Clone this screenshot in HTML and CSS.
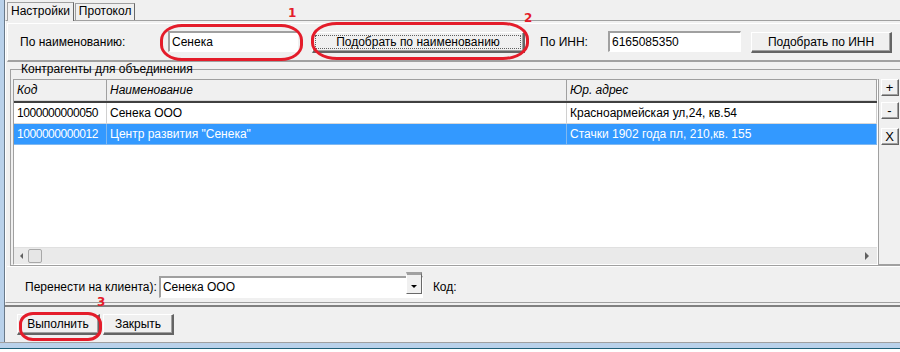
FILE: index.html
```html
<!DOCTYPE html>
<html lang="ru">
<head>
<meta charset="utf-8">
<link rel="stylesheet" href="styles.css">
</head>
<body>
<div class="window">
  <div class="frame-left"></div>
  <div class="client">
    <div class="tabs">
      <div class="tab active">Настройки</div>
      <div class="tab">Протокол</div>
    </div>
    <div class="page">
      <div class="search-panel">
        <span class="lbl lbl-name">По наименованию:</span>
        <div class="edit edit-name">Сенека</div>
        <div class="btn btn-find-name"><span class="focus">Подобрать по наименованию</span></div>
        <span class="lbl lbl-inn">По ИНН:</span>
        <div class="edit edit-inn">6165085350</div>
        <div class="btn btn-find-inn">Подобрать по ИНН</div>
      </div>
      <div class="group">
        <div class="group-title">Контрагенты для объединения</div>
        <div class="group-body">
          <div class="grid">
            <div class="grid-rows">
              <div class="row head">
                <div class="cell c1">Код</div>
                <div class="cell c2">Наименование</div>
                <div class="cell c3">Юр. адрес</div>
              </div>
              <div class="row">
                <div class="cell c1 num-cell">1000000000050</div>
                <div class="cell c2">Сенека ООО</div>
                <div class="cell c3">Красноармейская ул,24, кв.54</div>
              </div>
              <div class="row sel">
                <div class="cell c1 num-cell">1000000000012</div>
                <div class="cell c2">Центр развития "Сенека"</div>
                <div class="cell c3">Стачки 1902 года пл, 210,кв. 155</div>
              </div>
            </div>
            <div class="hscroll">
              <span class="arrow-left"></span>
              <span class="thumb"></span>
              <span class="track"></span>
              <span class="arrow-right"></span>
            </div>
          </div>
          <div class="side">
            <div class="sbtn">+</div>
            <div class="sbtn">-</div>
            <div class="sbtn x">X</div>
          </div>
        </div>
      </div>
      <div class="transfer">
        <span class="lbl">Перенести на клиента):</span>
        <div class="combo">
          <span class="combo-text">Сенека ООО</span>
          <span class="combo-btn"><span class="tri"></span></span>
        </div>
        <span class="lbl kod">Код:</span>
      </div>
    </div>
    <div class="footer">
      <div class="btn btn-run">Выполнить</div>
      <div class="btn btn-close">Закрыть</div>
    </div>
    <div class="frame-bottom"></div>
  </div>

  <div class="mark ell1"></div>
  <div class="mark ell2"></div>
  <div class="mark ell3"></div>
  <div class="num n1">1</div>
  <div class="num n2">2</div>
  <div class="num n3">3</div>
</div>
</body>
</html>
```

FILE: styles.css
```css
* { box-sizing: border-box; }
html, body { margin: 0; padding: 0; }
body {
  width: 900px;
  height: 352px;
  overflow: hidden;
  background: #f0f0f0;
  font-family: "Liberation Sans", "DejaVu Sans", sans-serif;
  font-size: 12px;
  color: #000;
}
.window {
  position: relative;
  display: flex;
  width: 900px;
  height: 352px;
}
.frame-left {
  width: 5px;
  flex: none;
  background: #b9d1ea;
  border-right: 1px solid #6a7a8a;
}
.client {
  flex: 1;
  display: flex;
  flex-direction: column;
  min-width: 0;
}
.tabs {
  display: flex;
  height: 20px;
  align-items: flex-end;
  padding-left: 2px;
}
.tab {
  height: 17px;
  padding: 0 3px;
  border: 1px solid #a0a0a0;
  border-bottom: none;
  background: #f0f0f0;
  line-height: 15px;
  margin-right: 1px;
  border-right-color: #696969;
}
.tab.active {
  height: 19px;
  line-height: 17px;
  background: #f0f0f0;
  position: relative;
  z-index: 1;
  margin-bottom: -1px;
  border-right-color: #696969;
  padding: 0 3px;
}
.page {
  height: 283px;
  border-top: 1px solid #a0a0a0;
  border-left: 1px solid #fff;
  border-bottom: 1px solid #a0a0a0;
  display: flex;
  flex-direction: column;
  padding: 2px 0 0 1px;
}
.search-panel {
  height: 39px;
  display: flex;
  align-items: center;
  border-top: 1px solid #fff;
  border-left: 1px solid #fff;
  border-bottom: 2px solid #a0a0a0;
  padding-left: 12px;
}
.lbl { white-space: nowrap; }
.lbl-name { width: 148px; }
.edit {
  height: 21px;
  background: #fff;
  border: 1px solid #fff;
  border-top: 2px solid #a0a0a0;
  border-left: 2px solid #a0a0a0;
  padding: 1px 2px;
  line-height: 16px;
  white-space: nowrap;
}
.edit-name { width: 130px; margin-top: -1px; }
.btn {
  height: 21px;
  background: #f0f0f0;
  border: 1px solid #fff;
  border-right: 2px solid #646464;
  border-bottom: 2px solid #646464;
  box-shadow: inset -1px -1px 0 #a0a0a0;
  display: flex;
  align-items: center;
  justify-content: center;
  white-space: nowrap;
}
.btn-find-name { width: 213px; margin-left: 14px; margin-top: 1px; padding: 2px; }
.btn-find-name .focus {
  display: flex;
  align-items: center;
  justify-content: center;
  width: 100%;
  height: 100%;
  border: 1px dotted #606060;
}
.lbl-inn { margin-left: 15px; width: 68px; }
.edit-inn { width: 133px; margin-top: -1px; }
.btn-find-inn { width: 141px; margin-left: 10px; margin-top: 1px; }

.group {
  margin-top: 1px;
  height: 203px;
  flex: none;
  display: flex;
  flex-direction: column;
  padding-left: 3px;
}
.group-title {
  height: 12px;
  line-height: 12px;
  padding-left: 11px;
  position: relative;
}
.group-title::before {
  content: "";
  position: absolute;
  left: 3px;
  top: 6px;
  width: 6px;
  border-top: 1px solid #a0a0a0;
}
.group-body {
  flex: 1;
  display: flex;
  border-left: 1px solid #a0a0a0;
  border-top: 1px solid #a0a0a0;
  margin-top: -6px;
  padding: 9px 0 0 2px;
  border-bottom: 1px solid #a0a0a0;
}
.grid {
  width: 865px;
  height: 186px;
  border: 1px solid #a0a0a0;
  border-right-color: #fff;
  border-bottom-color: #fff;
  background: #fff;
  display: flex;
  flex-direction: column;
}
.grid-rows { flex: 1; }
.row { display: flex; height: 21px; }
.row.head { height: 23px; background: #f0f0f0; border-bottom: 2px solid #404040; }
.row.head .cell { font-style: italic; border-right: 1px solid #a0a0a0; }
.cell {
  padding: 0 2px 0 3px;
  display: flex;
  align-items: center;
  border-right: 1px solid #d0d0d0;
  border-bottom: 1px solid #d8d8d8;
  white-space: nowrap;
  overflow: hidden;
}
.num-cell { letter-spacing: -0.45px; }
.c1 { width: 93px; }
.c2 { width: 460px; }
.c3 { flex: 1; }
.row.sel { background: #3399ff; color: #fff; }
.row.sel .cell { border-color: #80b8f0; }
.hscroll {
  height: 17px;
  background: #eaeaea;
  border-top: 1px solid #e0e0e0;
  display: flex;
  align-items: center;
  padding: 0 6px;
}
.arrow-left {
  width: 0; height: 0;
  border-top: 3px solid transparent;
  border-bottom: 3px solid transparent;
  border-right: 3px solid #606060;
  margin-right: 5px;
}
.thumb {
  width: 14px; height: 14px;
  background: #e6e6e6;
  border: 1px solid #a8a8a8;
  border-radius: 2px;
}
.track { flex: 1; }
.arrow-right {
  width: 0; height: 0;
  border-top: 4px solid transparent;
  border-bottom: 4px solid transparent;
  border-left: 4px solid #606060;
  margin-right: 2px;
}
.side {
  flex: 1;
  border-left: 1px solid #a0a0a0;
  border-bottom: 1px solid #a0a0a0;
  height: 186px;
  display: flex;
  flex-direction: column;
  align-items: center;
  padding-top: 0;
  gap: 6px;
}
.sbtn {
  width: 18px; height: 17px;
  background: #f0f0f0;
  border: 1px solid #fff;
  border-right: 1px solid #646464;
  border-bottom: 1px solid #646464;
  box-shadow: inset -1px -1px 0 #a0a0a0;
  display: flex;
  align-items: center;
  justify-content: center;
  font-size: 13px;
  line-height: 1;
}
.sbtn.x { margin-top: 3px; font-size: 13px; }

.transfer {
  flex: 1;
  display: flex;
  align-items: center;
  padding-left: 18px;
  padding-top: 4px;
  border-top: 1px solid #fff;
}
.combo {
  margin-left: 2px;
  width: 264px;
  height: 22px;
  background: #fff;
  border-top: 2px solid #a0a0a0;
  border-left: 2px solid #a0a0a0;
  border-right: 1px solid #fff;
  border-bottom: 1px solid #fff;
  display: flex;
  align-items: center;
  padding-left: 2px;
}
.combo-text { flex: 1; }
.combo-btn {
  width: 16px;
  height: 22px;
  margin-top: -6px;
  align-self: flex-start;
  background: #f0f0f0;
  border-top: 3px solid #a0a0a0;
  border-right: 1px solid #696969;
  border-bottom: 1px solid #696969;
  border-left: 1px solid #fff;
  display: flex;
  align-items: center;
  justify-content: center;
  padding-top: 6px;
}
.tri {
  width: 0; height: 0;
  border-left: 3px solid transparent;
  border-right: 3px solid transparent;
  border-top: 3px solid #000;
}
.kod { margin-left: 10px; }

.footer {
  height: 37px;
  margin-top: 2px;
  border-top: 2px solid #808080;
  display: flex;
  align-items: center;
  padding-left: 12px;
  gap: 3px;
}
.btn-run { width: 83px; height: 21px; }
.btn-close { width: 71px; height: 21px; }
.frame-bottom {
  height: 10px;
  background: #b9d1ea;
  border-top: 1px solid #a0a0a0;
  border-bottom: 3px solid #fff;
  box-shadow: inset 0 -1px 0 #1e5f78;
  margin-left: -6px;
}

.mark {
  position: absolute;
  border: 3px solid #e41c2a;
}
.ell1 { left: 160px; top: 24px; width: 143px; height: 37px; border-radius: 22px / 16px; }
.ell2 { left: 311px; top: 22px; width: 218px; height: 38px; border-radius: 26px / 17px; }
.ell3 { left: 19px; top: 312px; width: 83px; height: 29px; border-radius: 14px / 12px; }
.num {
  position: absolute;
  color: #e41c2a;
  font-weight: bold;
  font-size: 12px;
  font-family: "DejaVu Sans", sans-serif;
}
.n1 { left: 288px; top: 6px; }
.n2 { left: 524px; top: 11px; }
.n3 { left: 97px; top: 295px; }
```
